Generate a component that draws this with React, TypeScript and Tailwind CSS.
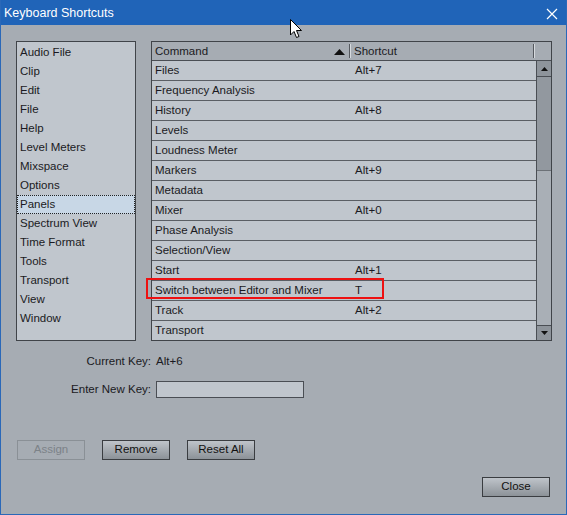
import React from "react";

const categories = [
  "Audio File",
  "Clip",
  "Edit",
  "File",
  "Help",
  "Level Meters",
  "Mixspace",
  "Options",
  "Panels",
  "Spectrum View",
  "Time Format",
  "Tools",
  "Transport",
  "View",
  "Window",
];

const commands: [string, string][] = [
  ["Files", "Alt+7"],
  ["Frequency Analysis", ""],
  ["History", "Alt+8"],
  ["Levels", ""],
  ["Loudness Meter", ""],
  ["Markers", "Alt+9"],
  ["Metadata", ""],
  ["Mixer", "Alt+0"],
  ["Phase Analysis", ""],
  ["Selection/View", ""],
  ["Start", "Alt+1"],
  ["Switch between Editor and Mixer", "T"],
  ["Track", "Alt+2"],
  ["Transport", ""],
];

function Button({ label, disabled }: { label: string; disabled?: boolean }) {
  return (
    <div
      className={
        disabled
          ? "w-[68px] h-[20px] flex items-center justify-center border border-[#8a9096] bg-[#a6acb3] text-[#7c8288]"
          : "w-[68px] h-[20px] flex items-center justify-center border border-[#3a3d41] bg-gradient-to-b from-[#bfc4ca] to-[#8c9298] text-[#111]"
      }
    >
      {label}
    </div>
  );
}

export default function App() {
  return (
    <div
      className="relative w-[567px] h-[515px] bg-[#a6acb3] flex flex-col border-x border-b border-[#2a68b8] text-[11.5px] text-[#1a1a22] overflow-hidden"
      style={{ fontFamily: '"Liberation Sans", Arial, sans-serif' }}
    >
      {/* title bar */}
      <div className="h-[25px] shrink-0 bg-[#2064b8] flex items-center justify-between pl-[4px] pr-[9px] pt-[2px] -mx-px text-white text-[12.5px]">
        <span>Keyboard Shortcuts</span>
        <svg width="12" height="12" viewBox="0 0 12 12">
          <path d="M1 1 L11 11 M11 1 L1 11" stroke="white" strokeWidth="1.2" />
        </svg>
      </div>

      {/* category list + command table */}
      <div className="flex mt-[16px] ml-[15px] gap-[15px] h-[300px]">
        <div className="w-[120px] h-[300px] border border-[#404449] bg-[#c0c6cd] pt-px flex flex-col">
          {categories.map((c) => (
            <div
              key={c}
              className={
                c === "Panels"
                  ? "h-[19px] flex items-center pl-[2px] bg-[#c8d7e6] border border-dotted border-[#222]"
                  : "h-[19px] flex items-center pl-[2px] border border-transparent"
              }
            >
              {c}
            </div>
          ))}
        </div>

        <div className="w-[401px] h-[300px] border border-[#404449] bg-[#a6acb3] flex flex-col overflow-hidden">
          {/* header */}
          <div className="h-[19px] shrink-0 flex border-b border-[#4a4e54]">
            <div className="w-[197px] flex items-center pl-[3px] pt-[2px] justify-between pr-[4px]">
              <span>Command</span>
              <svg width="11" height="6" viewBox="0 0 11 6">
                <path d="M0 6 L5.5 0 L11 6 Z" fill="#111" />
              </svg>
            </div>
            <div className="flex items-center my-[2px]">
              <div className="w-px h-full bg-[#55595f]" />
              <div className="w-px h-full bg-[#d6dade]" />
            </div>
            <div className="w-[182px] flex items-center pl-[3px] pt-[2px]">Shortcut</div>
            <div className="flex items-center my-[2px]">
              <div className="w-px h-full bg-[#55595f]" />
              <div className="w-px h-full bg-[#d6dade]" />
            </div>
          </div>

          <div className="flex flex-1 min-h-0">
            {/* rows */}
            <div className="w-[384px] flex flex-col">
              {commands.map(([name, key]) => (
                <div
                  key={name}
                  className="h-[20px] shrink-0 flex items-center bg-[#c0c6cd] border-b border-[#5a5e64]"
                >
                  <div className="w-[200px] pl-[3px]">{name}</div>
                  <div className="pl-[3px]">{key}</div>
                </div>
              ))}
            </div>

            {/* vertical scrollbar */}
            <div className="w-[15px] border-l border-[#4a4e54] flex flex-col bg-[#a9afb6]">
              <div className="h-[16px] shrink-0 bg-[#8e949b] border-b border-[#4a4e54] flex items-center justify-center">
                <svg width="7" height="4" viewBox="0 0 7 4">
                  <path d="M0 4 L3.5 0 L7 4 Z" fill="#111" />
                </svg>
              </div>
              <div className="h-[94px] shrink-0 bg-[#92989f] border-b border-[#6c7177]" />
              <div className="flex-1" />
              <div className="h-[15px] shrink-0 bg-[#8e949b] border-t border-[#4a4e54] flex items-center justify-center">
                <svg width="7" height="4" viewBox="0 0 7 4">
                  <path d="M0 0 L3.5 4 L7 0 Z" fill="#111" />
                </svg>
              </div>
            </div>
          </div>
        </div>
      </div>

      {/* key fields */}
      <div className="flex flex-col ml-[15px] mt-[12px] gap-[11px]">
        <div className="flex items-center h-[17px]">
          <div className="w-[135px] text-right">Current Key:</div>
          <div className="ml-[5px]">Alt+6</div>
        </div>
        <div className="flex items-center h-[17px]">
          <div className="w-[135px] text-right">Enter New Key:</div>
          <div className="ml-[5px] w-[148px] h-[17px] bg-[#c0c6cd] border border-[#4a4e54]" />
        </div>
      </div>

      {/* action buttons */}
      <div className="flex ml-[16px] mt-[42px] gap-[17px]">
        <Button label="Assign" disabled />
        <Button label="Remove" />
        <Button label="Reset All" />
      </div>

      <div className="flex justify-end mr-[16px] mt-[17px]">
        <div className="h-[21px]">
          <Button label="Close" />
        </div>
      </div>

      {/* highlight around the selected command */}
      <div className="absolute left-[145px] top-[278px] w-[238px] h-[21px] border-2 border-[#ee1111]" />

      {/* mouse pointer */}
      <svg
        className="absolute left-[289px] top-[19px]"
        width="13"
        height="20"
        viewBox="0 0 13 20"
      >
        <path
          d="M0.5 0.5 L0.5 16 L4 12.5 L6.5 18.5 L9 17.5 L6.5 11.5 L11.5 11.5 Z"
          fill="white"
          stroke="black"
          strokeWidth="1"
          strokeLinejoin="round"
        />
      </svg>
    </div>
  );
}
